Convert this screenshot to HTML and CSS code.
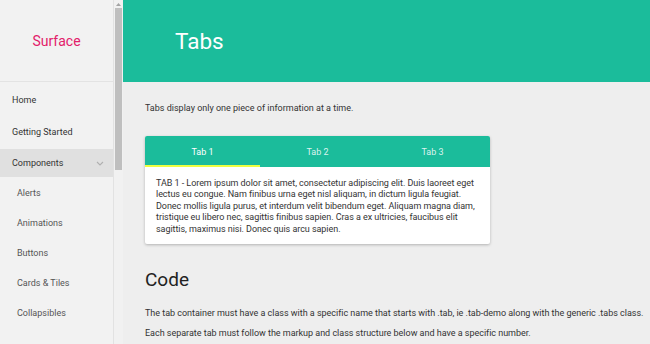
FILE: index.html
```html
<!DOCTYPE html>
<html lang="en">
<head>
  <meta charset="UTF-8">
  <meta name="viewport" content="width=device-width, initial-scale=1.0">
  <title>Surface - Tabs</title>
  <link rel="stylesheet" href="styles.css">
</head>
<body>
  <div class="page">
    <aside class="sidebar">
      <div class="sidebar-inner">
        <div class="logo">Surface</div>
        <ul class="nav">
          <li class="nav-item">Home</li>
          <li class="nav-item">Getting Started</li>
          <li class="nav-item active">Components
            <svg class="chevron" width="8" height="5" viewBox="0 0 8 5"><path d="M1 1l3 3 3-3" fill="none" stroke="#b0b0b0" stroke-width="1.1"/></svg>
          </li>
          <li class="sub-item">Alerts</li>
          <li class="sub-item">Animations</li>
          <li class="sub-item">Buttons</li>
          <li class="sub-item">Cards &amp; Tiles</li>
          <li class="sub-item">Collapsibles</li>
        </ul>
      </div>
      <div class="scrollbar">
        <svg class="scroll-arrow" width="5" height="3" viewBox="0 0 5 3"><path d="M0 3L2.5 0 5 3z" fill="#a3a3a3"/></svg>
        <div class="scroll-thumb"></div>
      </div>
    </aside>

    <main class="main">
      <header class="header">
        <h1>Tabs</h1>
      </header>

      <section class="content">
        <p class="intro">Tabs display only one piece of information at a time.</p>

        <div class="tabs tab-demo">
          <div class="tab-bar">
            <div class="tab active">Tab 1</div>
            <div class="tab">Tab 2</div>
            <div class="tab">Tab 3</div>
          </div>
          <div class="tab-body">
            TAB 1 - Lorem ipsum dolor sit amet, consectetur adipiscing elit. Duis laoreet eget lectus eu congue. Nam finibus urna eget nisl aliquam, in dictum ligula feugiat. Donec mollis ligula purus, et interdum velit bibendum eget. Aliquam magna diam, tristique eu libero nec, sagittis finibus sapien. Cras a ex ultricies, faucibus elit sagittis, maximus nisi. Donec quis arcu sapien.
          </div>
        </div>

        <h2>Code</h2>
        <p>The tab container must have a class with a specific name that starts with .tab, ie .tab-demo along with the generic .tabs class.</p>
        <p>Each separate tab must follow the markup and class structure below and have a specific number.</p>
      </section>
    </main>
  </div>
</body>
</html>
```

FILE: styles.css
```css
html, body {
  margin: 0;
  height: 100%;
  overflow: hidden;
}

body {
  font-family: Roboto, "Liberation Sans", sans-serif;
  background: #eeeeee;
  color: #333;
}

.page {
  display: flex;
  height: 100vh;
}

/* sidebar */

.sidebar {
  width: 123px;
  flex-shrink: 0;
  display: flex;
  background: #f2f2f2;
}

.sidebar-inner {
  width: 113px;
  overflow: hidden;
}

.scrollbar {
  width: 9px;
  border-left: 1px solid #e2e2e2;
  background: #f1f1f1;
  display: flex;
  flex-direction: column;
  align-items: center;
}

.scroll-arrow {
  margin: 3px 0 2px;
}

.scroll-thumb {
  width: 7px;
  height: 162px;
  background: #bfbfbf;
}

.logo {
  height: 81px;
  display: flex;
  align-items: center;
  justify-content: center;
  font-size: 14px;
  color: #e2206a;
  border-bottom: 1px solid #e3e3e3;
}

.nav {
  list-style: none;
  margin: 0;
  padding: 2px 0 0;
}

.nav-item {
  display: flex;
  align-items: center;
  justify-content: space-between;
  height: 32px;
  padding: 0 9px 0 12px;
  font-size: 9px;
  color: #333;
}

.nav-item.active {
  background: #e0e0e0;
  height: 28px;
  margin: 1px 0;
}

.sub-item {
  height: 30px;
  line-height: 30px;
  padding-left: 17px;
  font-size: 9px;
  color: #555;
}

/* main */

.main {
  flex: 1;
  min-width: 0;
}

.header {
  height: 82px;
  background: #1bbc9b;
  display: flex;
  align-items: center;
  padding-left: 52px;
}

.header h1 {
  margin: 0;
  font-weight: 400;
  font-size: 22.5px;
  color: #fff;
}

.content {
  padding: 21px 0 0 22px;
}

.content p {
  margin: 0 0 10px;
  font-size: 9px;
  line-height: 10px;
  letter-spacing: -0.02px;
  color: #333;
}

.content .intro {
  margin-bottom: 23px;
  letter-spacing: 0;
}

.tabs {
  width: 345px;
  background: #fff;
  border-radius: 2px;
  box-shadow: 0 1px 3px rgba(0, 0, 0, 0.25);
}

.tab-bar {
  display: flex;
  background: #1bbc9b;
  border-radius: 2px 2px 0 0;
}

.tab {
  flex: 1;
  height: 31px;
  display: flex;
  align-items: center;
  justify-content: center;
  font-size: 9px;
  color: rgba(255, 255, 255, 0.85);
  box-sizing: border-box;
}

.tab.active {
  color: #fff;
  border-bottom: 2px solid #eeff41;
  padding-top: 2px;
}

.tab-body {
  padding: 11px 12px 9px 11px;
  font-size: 9px;
  line-height: 11.4px;
  letter-spacing: -0.05px;
  color: #333;
}

.content h2 {
  margin: 24px 0 16px;
  font-weight: 400;
  font-size: 19px;
  line-height: 24px;
  color: #222;
}
```
